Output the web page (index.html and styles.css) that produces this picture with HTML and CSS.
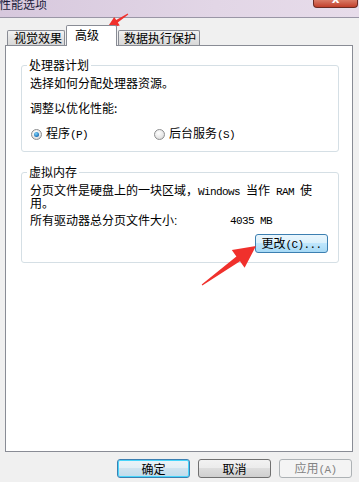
FILE: index.html
```html
<!DOCTYPE html>
<html lang="zh-CN">
<head>
<meta charset="utf-8">
<title>性能选项</title>
<link rel="stylesheet" href="styles.css">
</head>
<body>
<div class="window">
  <div class="titlebar">
    <span class="title">性能选项</span>
    <span class="close"><span class="close-x">x</span></span>
  </div>
  <div class="main">
    <div class="tabs">
      <div class="tab tab-visual">视觉效果</div>
      <div class="tab tab-adv active">高级</div>
      <div class="tab tab-dep">数据执行保护</div>
    </div>
    <div class="panel">
      <fieldset class="group g1">
        <legend>处理器计划</legend>
        <p class="line">选择如何分配处理器资源。</p>
        <p class="line sub">调整以优化性能:</p>
        <div class="radios">
          <label class="option opt1"><span class="radio checked"></span><span>程序<span class="hw">(P)</span></span></label>
          <label class="option"><span class="radio"></span><span>后台服务<span class="hw">(S)</span></span></label>
        </div>
      </fieldset>
      <fieldset class="group g2">
        <legend>虚拟内存</legend>
        <p class="line desc">分页文件是硬盘上的一块区域，<span class="hw">Windows </span>当作<span class="hw"> RAM </span>使<br>用。</p>
        <div class="line total"><span class="total-label">所有驱动器总分页文件大小:</span><span class="hw">4035 MB</span></div>
        <div class="change-row"><button class="btn btn-hot">更改<span class="hw">(C)...</span></button></div>
      </fieldset>
    </div>
    <div class="buttons">
      <button class="btn btn-default">确定</button>
      <button class="btn">取消</button>
      <button class="btn btn-disabled">应用<span class="hw">(A)</span></button>
    </div>
  </div>
  <svg class="arrows" width="359" height="482" viewBox="0 0 359 482">
    <polygon points="128.3,14.4 117.8,22.5 119.8,25.5 107,28 114.2,17.1 116.2,20.1 127.7,13.6" fill="#f0302c"/>
    <polygon points="202.3,285.4 240.0,261.3 244.6,267.8 256,246 231.8,250.0 236.4,256.5 201.7,284.6" fill="#f0302c"/>
  </svg>
</div>
</body>
</html>
```
FILE: styles.css
```css
* { box-sizing: border-box; }
html, body { margin: 0; padding: 0; }
body {
  background: #f0f0f0;
  font-family: "Noto Sans CJK SC", "Noto Sans", sans-serif;
  font-size: 12px;
  line-height: 12px;
  color: #000;
}
.window {
  position: relative;
  width: 359px;
  height: 482px;
  overflow: hidden;
  background: #f0f0f0;
}
.titlebar {
  height: 18px;
  border-bottom: 1px solid #9a96a6;
  background: linear-gradient(to right, #d7c8dd, #e2d6e6 60%, #e7dcea);
  display: flex;
  justify-content: space-between;
  align-items: flex-start;
}
.title {
  margin-top: -3px;
  margin-left: -1px;
  color: #1d1d3c;
  font-size: 12px;
  line-height: 13px;
}
.close {
  width: 45px;
  height: 8px;
  margin-right: 1px;
  border: 1px solid #6b2a22;
  border-top: none;
  border-radius: 0 0 4px 4px;
  background: linear-gradient(#d97a66, #c2402c);
  display: flex;
  justify-content: center;
  overflow: hidden;
}
.close-x {
  color: #fff;
  font-family: "DejaVu Sans", sans-serif;
  font-weight: bold;
  font-size: 12px;
  line-height: 12px;
  margin-top: -7px;
}
.main {
  padding: 0 6px 0 5px;
}
.tabs {
  display: flex;
  align-items: flex-end;
  height: 20px;
  margin-top: 7px;
  padding-left: 2px;
}
.tab {
  height: 15px;
  border: 1px solid #898c95;
  border-bottom: none;
  border-radius: 2px 2px 0 0;
  background: linear-gradient(#f3f3f3, #e4e4e4 50%, #d8d8d8);
  padding: 1px 0 0 6px;
  white-space: nowrap;
}
.tab-visual { width: 58px; }
.tab-adv { width: 51px; margin-left: 1px; }
.tab-dep { width: 82px; margin-left: 1px; padding-left: 5px; }
.tab.active {
  height: 21px;
  margin-bottom: -1px;
  position: relative;
  z-index: 1;
  background: #fff;
  padding: 3px 0 0 8px;
}
.panel {
  width: 348px;
  height: 407px;
  border: 1px solid #898c95;
  background: #fff;
  padding: 0 0 0 15px;
}
.group {
  width: 318px;
  margin: 0;
  border: 1px solid #d5dfe5;
  border-radius: 3px;
  padding: 0 9px 0 8px;
  min-width: 0;
}
.group legend {
  padding: 0 2px;
  margin-left: -3px;
  line-height: 12px;
  height: 12px;
}
.g1 { margin-top: 13px; padding-top: 6px; padding-bottom: 11px; }
.g2 { margin-top: 14px; padding-top: 7px; padding-bottom: 9px; }
.line { margin: 0; line-height: 12px; white-space: nowrap; }
.desc, .total {
  font-family: "Liberation Sans", "Noto Sans CJK SC", sans-serif;
}
.desc { line-height: 12px; }
.sub { margin-top: 13px; }
.hw {
  font-family: "Liberation Mono", monospace;
  font-size: 11px;
  letter-spacing: -0.6px;
}
.radios {
  display: flex;
  align-items: center;
  margin-top: 14px;
  height: 12px;
}
.option {
  display: flex;
  align-items: center;
  gap: 4px;
}
.opt1 { width: 123px; margin-left: 1px; }
.radio {
  width: 11px;
  height: 11px;
  border-radius: 50%;
  border: 1px solid #8d8e8f;
  background: radial-gradient(circle at 40% 35%, #ffffff, #e6e6e6 60%, #c9c9c9);
  display: flex;
  align-items: center;
  justify-content: center;
}
.radio.checked::after {
  content: "";
  width: 5px;
  height: 5px;
  border-radius: 50%;
  background: radial-gradient(circle at 40% 35%, #7fd6fa, #1b6fb8 70%, #0e4a88);
}
.total { margin-top: 5px; display: flex; }
.total-label { width: 200px; }
.change-row {
  display: flex;
  justify-content: flex-end;
  margin-top: 7px;
  padding-right: 1px;
}
.btn {
  width: 73px;
  height: 19px;
  border: 1px solid #707070;
  border-radius: 3px;
  background: linear-gradient(#f2f2f2, #ebebeb 49%, #dddddd 50%, #cfcfcf);
  font-family: "Noto Sans CJK SC", "Noto Sans", sans-serif;
  font-size: 12px;
  line-height: 12px;
  color: #000;
  padding: 0;
  margin: 0;
  white-space: nowrap;
}
.btn-hot {
  border-color: #3c7fb1;
  background: linear-gradient(#eaf6fd, #d9f0fc 49%, #bee6fd 50%, #a7d9f5);
}
.btn-default {
  border-color: #3c7fb1;
  box-shadow: inset 0 0 0 1px #48d5fb;
  background: linear-gradient(#eaf3f8, #e2eef5 49%, #cfe3ef 50%, #c0dbeb);
}
.btn-disabled {
  border-color: #adb2b5;
  background: #f4f4f4;
  color: #838383;
}
.buttons {
  display: flex;
  justify-content: flex-end;
  gap: 8px;
  margin-top: 7px;
  padding-right: 1px;
}
.arrows {
  position: absolute;
  left: 0;
  top: 0;
  pointer-events: none;
}
```
